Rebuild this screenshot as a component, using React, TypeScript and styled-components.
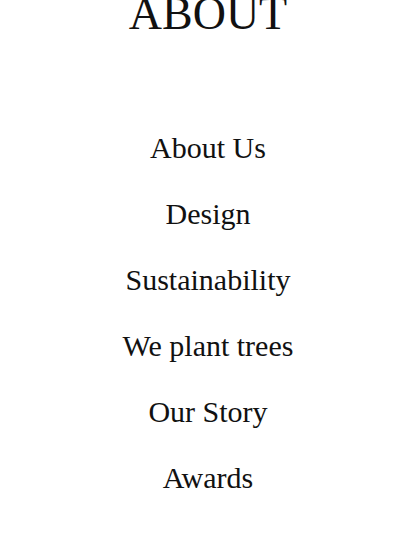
import React from "react";
import styled, { createGlobalStyle } from "styled-components";

const Global = createGlobalStyle`
  html, body { margin: 0; padding: 0; background: #ffffff; }
  body { font-family: "Liberation Serif", "Times New Roman", serif; color: #111111; }
`;

const Page = styled.main`
  display: flex;
  flex-direction: column;
  align-items: center;
  width: 416px;
`;

const Title = styled.h1`
  margin: -9px 0 0;
  font-size: 46px;
  line-height: 46px;
  font-weight: 400;
  letter-spacing: 0;
`;

const Menu = styled.ul`
  list-style: none;
  margin: 78px 0 0;
  padding: 0;
  display: flex;
  flex-direction: column;
  align-items: center;
`;

const Item = styled.li`
  font-size: 30px;
  line-height: 66px;
  text-align: center;
`;

const items = ["About Us", "Design", "Sustainability", "We plant trees", "Our Story", "Awards"];

export default function App() {
  return (
    <>
      <Global />
      <Page>
        <Title>ABOUT</Title>
        <Menu>
          {items.map((t) => (
            <Item key={t}>{t}</Item>
          ))}
        </Menu>
      </Page>
    </>
  );
}
